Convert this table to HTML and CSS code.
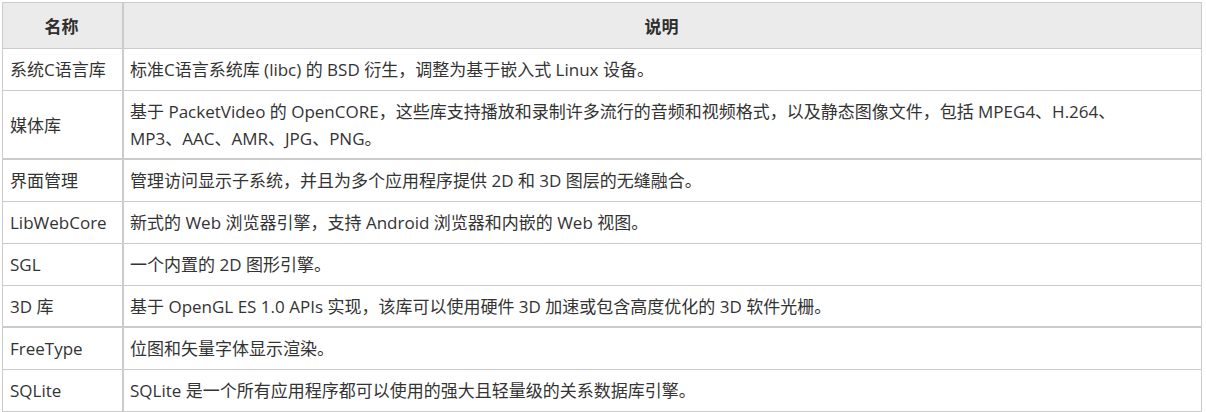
FILE: index.html
```html
<!DOCTYPE html>
<html lang="zh-CN">
<head>
<meta charset="utf-8">
<title>Android 系统库</title>
<link rel="stylesheet" href="styles.css">
</head>
<body>
<table class="lib-table">
  <thead>
    <tr><th class="col-name">名称</th><th>说明</th></tr>
  </thead>
  <tbody>
    <tr><td>系统C语言库</td><td>标准C语言系统库 (libc) 的 BSD 衍生，调整为基于嵌入式 Linux 设备。</td></tr>
    <tr class="thick"><td>媒体库</td><td>基于 PacketVideo 的 OpenCORE，这些库支持播放和录制许多流行的音频和视频格式，以及静态图像文件，包括 MPEG4、H.264、<br>MP3、AAC、AMR、JPG、PNG。</td></tr>
    <tr><td>界面管理</td><td>管理访问显示子系统，并且为多个应用程序提供 2D 和 3D 图层的无缝融合。</td></tr>
    <tr><td>LibWebCore</td><td>新式的 Web 浏览器引擎，支持 Android 浏览器和内嵌的 Web 视图。</td></tr>
    <tr><td>SGL</td><td>一个内置的 2D 图形引擎。</td></tr>
    <tr class="thick"><td>3D 库</td><td>基于 OpenGL ES 1.0 APIs 实现，该库可以使用硬件 3D 加速或包含高度优化的 3D 软件光栅。</td></tr>
    <tr><td>FreeType</td><td>位图和矢量字体显示渲染。</td></tr>
    <tr><td>SQLite</td><td>SQLite 是一个所有应用程序都可以使用的强大且轻量级的关系数据库引擎。</td></tr>
  </tbody>
</table>
</body>
</html>
```

FILE: styles.css
```css
html, body {
  margin: 0;
  padding: 0;
  background: #ffffff;
}
body {
  padding: 2px 0 0 2px;
  font-family: "Open Sans", "Noto Sans CJK SC", sans-serif;
  font-size: 17px;
  color: #333333;
}
.lib-table {
  width: 1200px;
  border-collapse: collapse;
  table-layout: fixed;
}
.lib-table th,
.lib-table td {
  border: 1px solid #cbcbcb;
  padding: 7px 8px 7px 6px;
  line-height: 27px;
  text-align: left;
  vertical-align: middle;
}
.lib-table td:first-child {
  padding-left: 7px;
}
.lib-table th {
  background: #ebebeb;
  font-weight: bold;
  text-align: center;
  padding-top: 9px;
  padding-bottom: 9px;
  font-family: "Noto Sans CJK SC", sans-serif;
  color: #2e2e2e;
}
.lib-table .col-name {
  width: 105px;
}
.lib-table td:first-child,
.lib-table th:first-child {
  border-right-width: 2px;
}
.lib-table tr.thick td {
  border-bottom-width: 2px;
  padding-bottom: 6px;
}
```
